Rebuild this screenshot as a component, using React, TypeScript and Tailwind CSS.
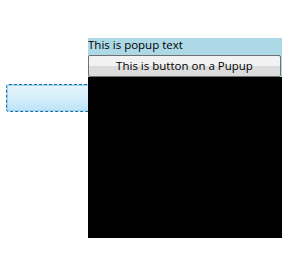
export default function App() {
  return (
    <div className="relative w-[297px] h-[261px] bg-white" style={{ fontFamily: '"Open Sans", "Noto Sans", sans-serif' }}>
      <div className="pt-[84px] pl-[6px]">
        <div className="w-[110px] h-[28px] rounded-[3px] border border-dashed border-[#1b6f99] bg-gradient-to-b from-[#e6f5fd] via-[#d6eefb] via-50% to-[#bde3f8] shadow-[inset_0_0_0_1px_#9fd3ef]" />
      </div>
      <div className="absolute left-[88px] top-[38px] w-[194px] h-[200px] bg-black flex flex-col">
        <div className="h-[14px] bg-[#add8e6] text-[11.5px] leading-[14px] text-black whitespace-nowrap">This is popup text</div>
        <div className="bg-[#add8e6] pr-[1px]">
          <button className="w-full h-[22px] rounded-[2px] border border-[#707070] bg-gradient-to-b from-[#f2f2f2] from-50% to-[#dcdcdc] to-50% text-[11.5px] leading-[18px] text-black">
            This is button on a Pupup
          </button>
        </div>
        <div className="flex-1 bg-black" />
      </div>
    </div>
  );
}
